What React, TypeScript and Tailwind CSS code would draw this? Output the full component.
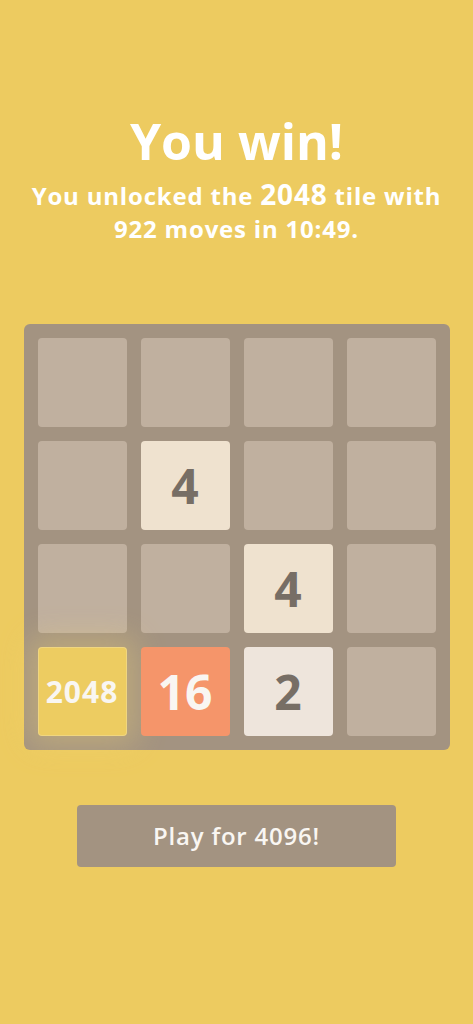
const board: (number | null)[][] = [
  [null, null, null, null],
  [null, 4, null, null],
  [null, null, 4, null],
  [2048, 16, 2, null],
];

function Tile({ value }: { value: number | null }) {
  if (value === null) {
    return <div className="w-[89px] h-[89px] rounded-[4px] bg-[#c0b09f]" />;
  }
  if (value === 2048) {
    return (
      <div className="w-[89px] h-[89px] rounded-[4px] bg-[#edcc61] flex items-center justify-center text-[30px] tracking-[1px] font-bold text-[#f9f6f2] shadow-[0_0_30px_10px_rgba(243,215,116,0.32),inset_0_0_0_1px_rgba(255,255,255,0.2)]">
        2048
      </div>
    );
  }
  const styles: Record<number, string> = {
    2: 'bg-[#eee5dc] text-[#776e65]',
    4: 'bg-[#efe2cf] text-[#776e65]',
    16: 'bg-[#f5956a] text-[#f9f6f2]',
  };
  return (
    <div
      className={`w-[89px] h-[89px] rounded-[4px] flex items-center justify-center text-[48px] font-bold ${styles[value]}`}
    >
      {value}
    </div>
  );
}

export default function App() {
  return (
    <div
      className="min-h-screen bg-[#edcb60] flex flex-col items-center"
      style={{ fontFamily: '"Open Sans", "Noto Sans", sans-serif' }}
    >
      <h1 className="mt-[108px] text-[50px] leading-[66px] font-bold text-white">You win!</h1>
      <p className="mt-[4px] text-[24px] leading-[33px] tracking-[0.8px] font-bold text-white text-center">
        You unlocked the <span className="text-[28px]">2048</span> tile with
        <br />
        922 moves in 10:49.
      </p>

      <div className="mt-[79px] w-[426px] rounded-[6px] bg-[#a39381] p-[14px] grid grid-cols-4 gap-[14px]">
        {board.flat().map((v, i) => (
          <Tile key={i} value={v} />
        ))}
      </div>

      <button className="mt-[55px] w-[319px] h-[62px] rounded-[4px] bg-[#a39381] text-[#f9f6f2] text-[24px] tracking-[0.8px] font-semibold">
        Play for 4096!
      </button>
    </div>
  );
}
